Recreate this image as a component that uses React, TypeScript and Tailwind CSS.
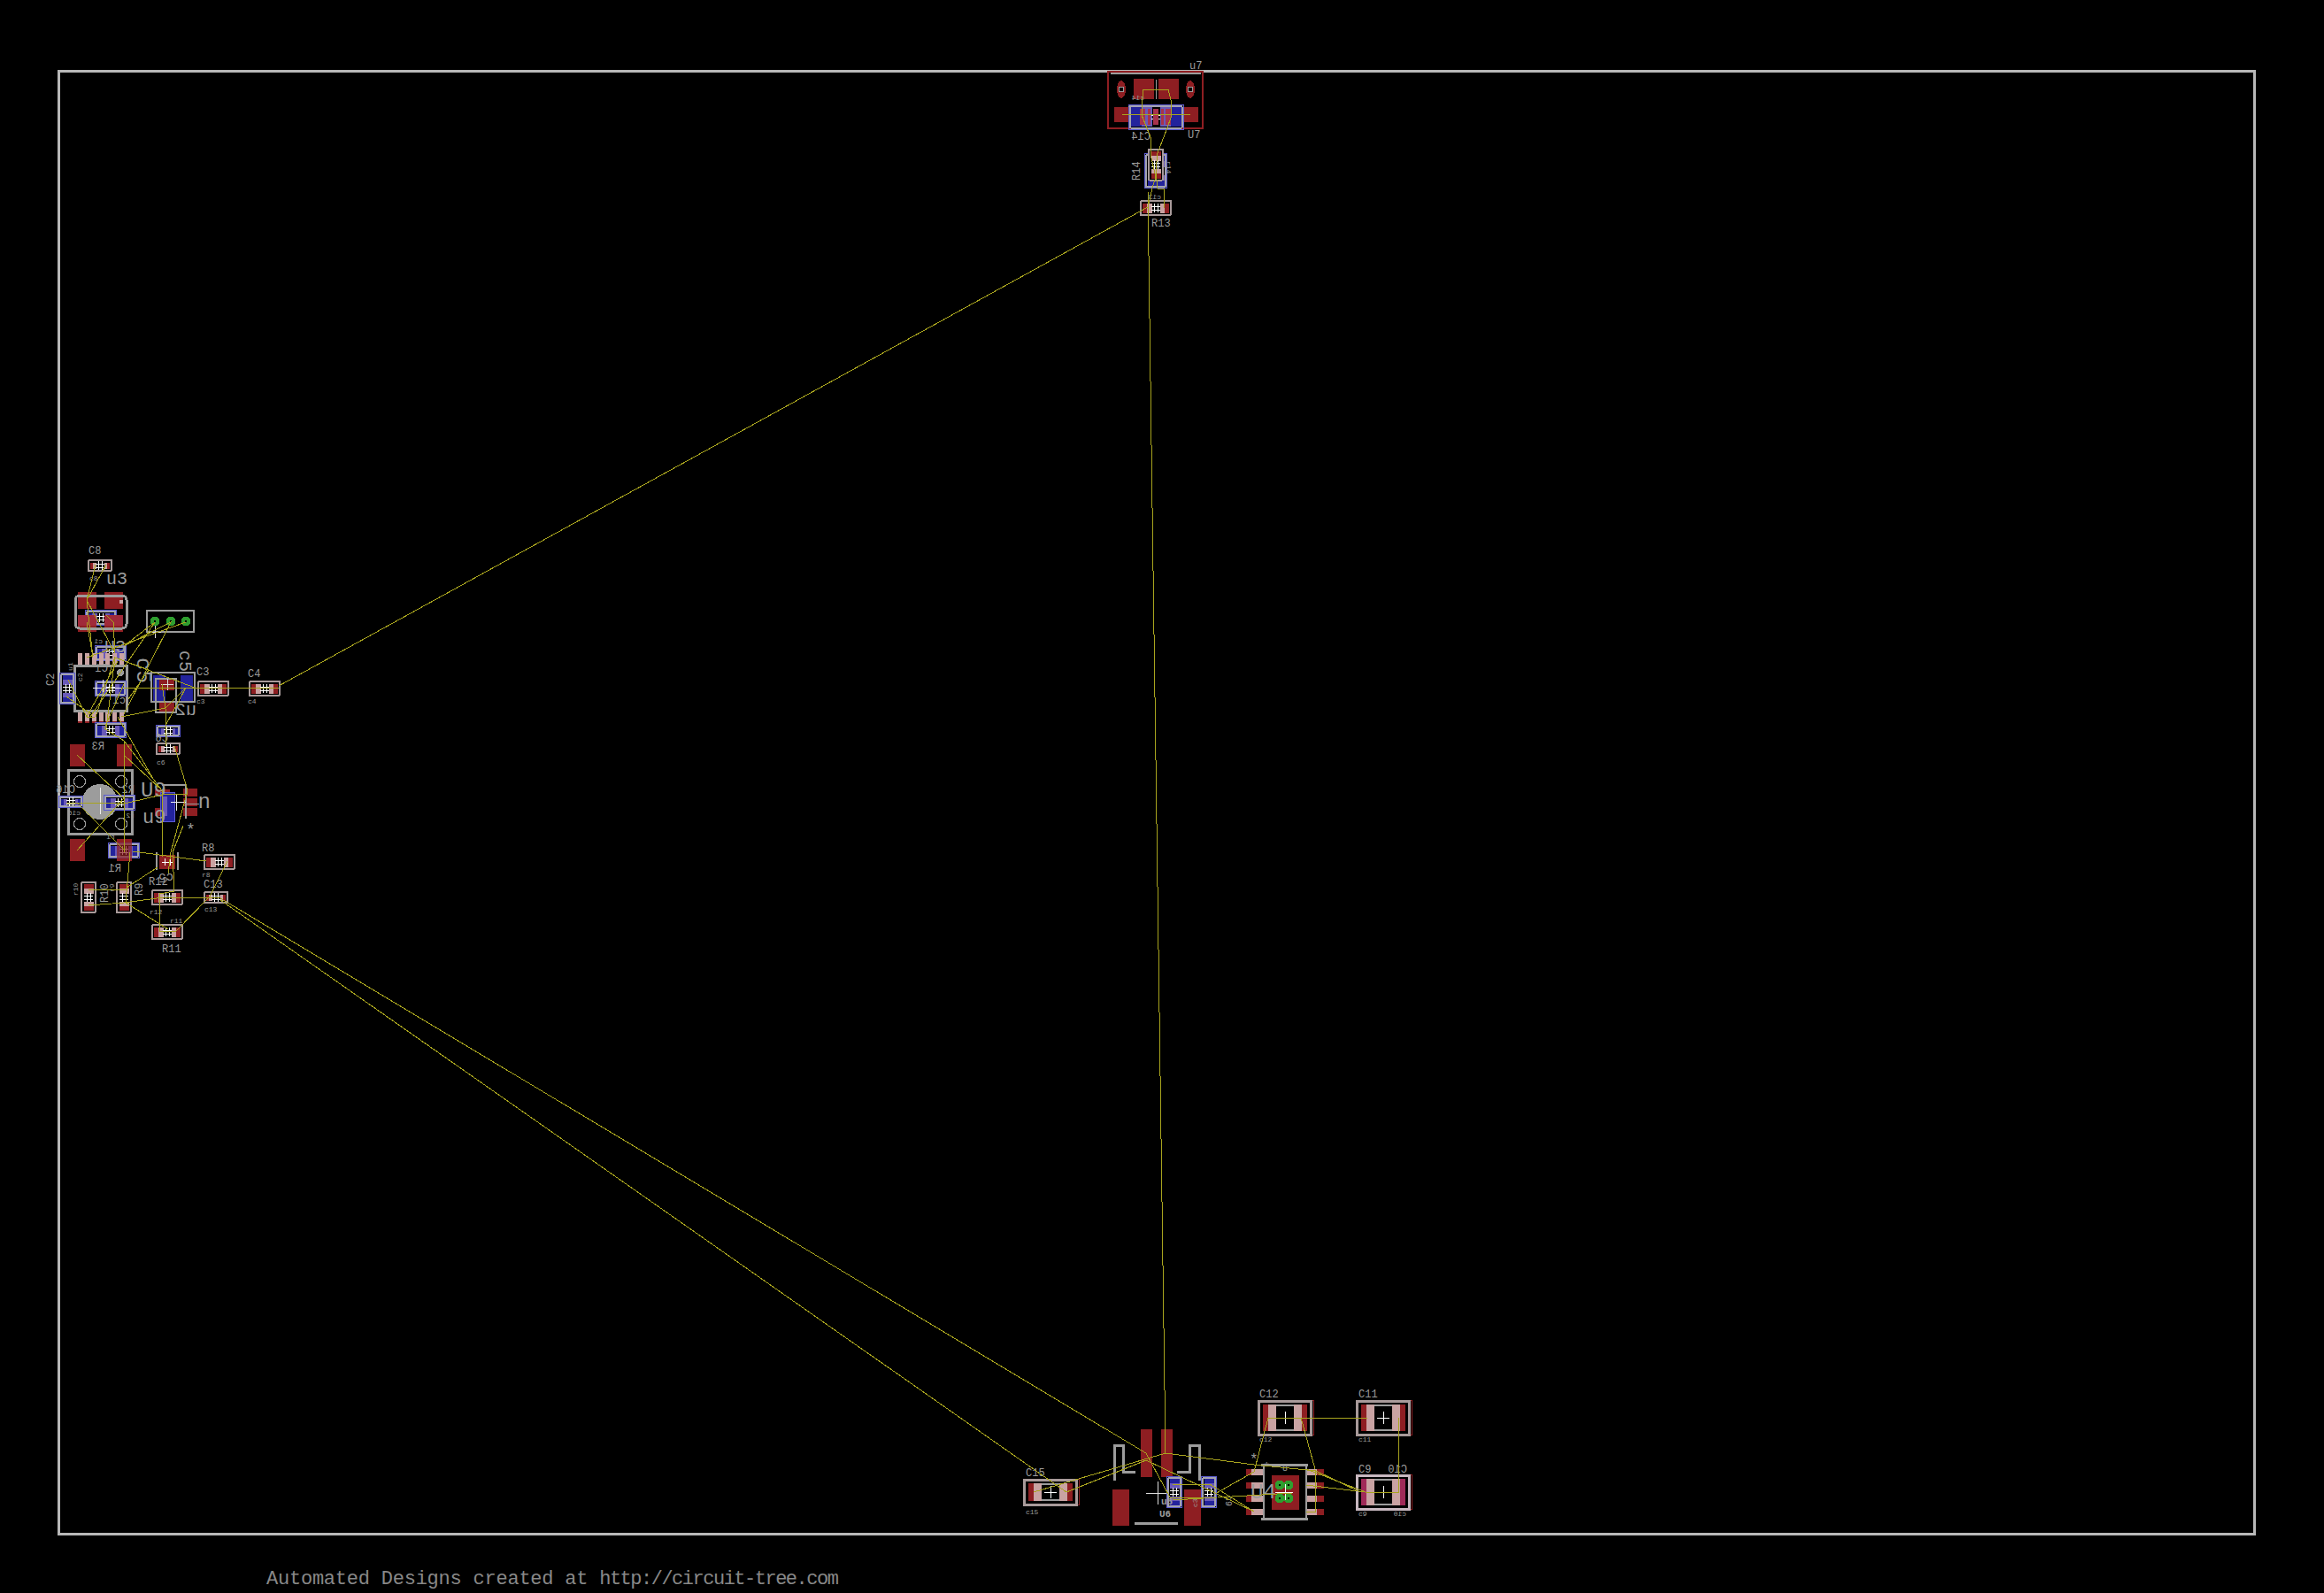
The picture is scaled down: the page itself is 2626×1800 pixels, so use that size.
const GREY = "#9c9c9c";
const SILK = "#a89a9a";
const RED = "#8e1e22";
const PINK = "#c9a3a3";
const BLUE = "#23239c";
const LILAC = "#6a5ab8";
const WIRE = "#a8a41e";
const GREEN = "#2f9e2f";

type Pt = [number, number];

// airwires, in board pixels
const wires: Pt[][] = [
  // long runs
  [[1297, 234], [315, 775]],
  [[1297, 217], [1317, 1642]],
  [[249, 1015], [1295, 1642], [1322, 1692], [1370, 1692]],
  [[249, 1017], [1205, 1686]],
  // top cluster
  [[1292, 101], [1320, 101], [1323, 113], [1324, 130], [1318, 147], [1308, 173], [1306, 193], [1308, 213], [1315, 213], [1315, 235]],
  [[1268, 129], [1345, 129]],
  [[1292, 101], [1290, 120], [1290, 130], [1300, 155], [1300, 175], [1306, 200], [1302, 212], [1297, 235]],
  // bottom cluster
  [[1168, 1686], [1317, 1642], [1417, 1655], [1487, 1662], [1537, 1686]],
  [[1205, 1686], [1295, 1650], [1417, 1708]],
  [[1325, 1677], [1367, 1677], [1417, 1708]],
  [[1325, 1695], [1460, 1687]],
  [[1373, 1688], [1417, 1663], [1433, 1602], [1545, 1602]],
  [[1470, 1602], [1486, 1660], [1487, 1708], [1476, 1708]],
  [[1580, 1602], [1580, 1686], [1543, 1686], [1476, 1660]],
  [[1476, 1678], [1543, 1686]],
  // left cluster, upper
  [[108, 638], [98, 678], [105, 743]],
  [[120, 638], [98, 678], [130, 738]],
  [[98, 703], [105, 742]],
  [[128, 703], [130, 738]],
  [[120, 695], [128, 703]],
  [[98, 743], [210, 703]],
  [[140, 730], [193, 703], [140, 807]],
  [[140, 730], [175, 703], [102, 810]],
  [[130, 743], [220, 777], [208, 777]],
  [[130, 743], [168, 757], [145, 790]],
  [[140, 777], [315, 777]],
  [[77, 768], [98, 810], [107, 810]],
  [[75, 787], [103, 807]],
  [[133, 747], [98, 810]],
  [[130, 742], [108, 810]],
  [[130, 742], [120, 823]],
  [[140, 773], [118, 823]],
  [[137, 810], [187, 800], [210, 777], [187, 820]],
  [[183, 773], [187, 800], [188, 843]],
  [[133, 810], [173, 880]],
  [[197, 843], [212, 893], [193, 963], [190, 987]],
  [[140, 837], [140, 963]],
  [[118, 823], [140, 837], [173, 880], [183, 893]],
  [[87, 853], [140, 902]],
  [[87, 961], [140, 902]],
  [[140, 853], [183, 893]],
  // left cluster, lower
  [[75, 907], [145, 907], [183, 898]],
  [[87, 907], [140, 960]],
  [[150, 962], [233, 973]],
  [[147, 963], [142, 1020], [190, 1050]],
  [[183, 893], [183, 968]],
  [[212, 897], [183, 897]],
  [[207, 933], [195, 963], [197, 1007], [180, 1010], [180, 1052]],
  [[178, 980], [143, 1003]],
  [[100, 1005], [143, 1005]],
  [[100, 1023], [140, 1020], [177, 1015], [250, 1014]],
  [[257, 973], [237, 1013], [198, 1053], [180, 1052]],
];

type ChipProps = { x: number; y: number; w?: number; h?: number; layer?: "top" | "bottom"; turn?: boolean };

function Chip({ x, y, w = 35, h = 17, layer = "top", turn = false }: ChipProps) {
  const bottom = layer === "bottom";
  const pad = (w - 14) / 2;
  const half = pad / 2;
  const transform = `translate(${x} ${y})${turn ? " rotate(90)" : ""}`;
  return (
    <g transform={transform}>
      {bottom && <rect x={-w / 2} y={-h / 2} width={w} height={h} fill="none" stroke="#5b5bd0" />}
      <rect
        x={-w / 2 + (bottom ? 1.5 : 0.5)}
        y={-h / 2 + (bottom ? 1.5 : 0.5)}
        width={w - (bottom ? 3 : 1)}
        height={h - (bottom ? 3 : 1)}
        rx={1}
        fill="#000"
        stroke={bottom ? "#a3a3b0" : SILK}
        strokeWidth="2"
      />
      {[-1, 1].map((s) => (
        <g key={s}>
          <rect x={s < 0 ? -w / 2 + 2.5 : w / 2 - 2.5 - half} y={-h / 2 + 3} width={half} height={h - 6} fill={bottom ? BLUE : RED} />
          <rect x={s < 0 ? -w / 2 + 2.5 + half : w / 2 - 2.5 - pad} y={-h / 2 + 3} width={half} height={h - 6} fill={bottom ? LILAC : PINK} />
        </g>
      ))}
      <path d="M-5 -2H5M-5 2H5M-2 -5V5M2 -5V5" stroke="#fff" fill="none" />
    </g>
  );
}

type BigCapProps = { x: number; y: number; h?: number; tint?: string; edge?: string };

function BigCap({ x, y, h = 38, tint = RED, edge = SILK }: BigCapProps) {
  const t = h / 2;
  return (
    <g transform={`translate(${x} ${y})`}>
      <rect x={-31} y={-t - 1} width={63} height={h + 1} fill="none" stroke={RED} />
      <rect x={-29.5} y={-t} width={59} height={h} fill="#000" stroke={edge} strokeWidth="3" />
      <rect x={-25} y={4 - t} width={15} height={h - 8} fill={tint} />
      <rect x={10} y={4 - t} width={15} height={h - 8} fill={tint} />
      <rect x={-19} y={4 - t} width={9} height={h - 8} fill={PINK} />
      <rect x={10} y={4 - t} width={9} height={h - 8} fill={PINK} />
      <path d={`M-10 ${5 - t}H10M-10 ${t - 5}H10`} stroke={GREY} strokeWidth="2" />
      <path d="M-7 0H7M0 -7V7" stroke="#fff" />
    </g>
  );
}

type LabelProps = { x: number; y: number; t: string; s?: number; flip?: boolean; rot?: number; bold?: boolean };

function Label({ x, y, t, s = 11, flip = false, rot = 0, bold = false }: LabelProps) {
  const transform = `translate(${x} ${y})${rot ? ` rotate(${rot})` : ""}${flip ? " scale(-1 1)" : ""}`;
  return (
    <text
      transform={transform}
      fontSize={s}
      fontWeight={bold ? "bold" : "normal"}
      fill={GREY}
      fontFamily="'Liberation Mono', monospace"
    >
      {t}
    </text>
  );
}

function Pads({ rects, fill = RED }: { rects: number[][]; fill?: string }) {
  return (
    <>
      {rects.map(([x, y, w, h], i) => (
        <rect key={i} x={x} y={y} width={w} height={h} fill={fill} />
      ))}
    </>
  );
}

function TopCluster() {
  return (
    <g>
      <rect x={1252} y={81} width={107} height={64} fill="none" stroke={RED} strokeWidth="2" />
      <path d="M1255 83H1357" stroke={GREY} strokeWidth="2" />
      <Pads rects={[[1281, 89, 23, 23], [1309, 89, 23, 23], [1259, 121, 20, 17], [1335, 121, 19, 17]]} />
      {[1267, 1345].map((x) => (
        <g key={x}>
          <ellipse cx={x} cy={101} rx={5} ry={10} fill={RED} />
          <circle cx={x} cy={101} r={3} fill="#000" stroke={GREY} />
        </g>
      ))}
      <path d="M1306 90V112" stroke={GREY} />
      <Chip x={1306} y={132} w={62} h={28} layer="bottom" />
      <Pads rects={[[1288, 123, 6, 18], [1317, 123, 6, 18], [1303, 123, 6, 18], [1297, 123, 3, 18], [1312, 123, 3, 18]]} fill="#a8324c" />
      <Chip x={1306} y={193} w={39} h={25} layer="bottom" turn />
      <Chip x={1306} y={186} w={36} h={17} turn />
      <Chip x={1306} y={235} />
      <Label x={1344} y={78} t="u7" s={12} />
      <Label x={1342} y={156} t="U7" s={12} />
      <Label x={1300} y={158} t="C14" s={12} flip />
      <Label x={1293} y={113} t="c14" s={8} flip />
      <Label x={1288} y={204} t="R14" s={12} rot={-90} />
      <Label x={1318} y={182} t="r14" s={8} rot={90} />
      <Label x={1312} y={225} t="c13" s={8} flip />
      <Label x={1301} y={256} t="R13" s={12} />
    </g>
  );
}

function Qfn() {
  const pins = [88, 96, 104, 112, 119, 127, 135];
  return (
    <g>
      {pins.map((x) => (
        <g key={x}>
          <rect x={x} y={738} width={5} height={14} fill={PINK} />
          <rect x={x} y={803} width={5} height={14} fill={PINK} />
          <rect x={x} y={815} width={5} height={2} fill={RED} />
        </g>
      ))}
      <rect x={84} y={752} width={59} height={51} fill="none" stroke={GREY} strokeWidth="3" />
      <circle cx={136} cy={760} r={4} fill={GREY} />
    </g>
  );
}

function LeftCluster() {
  return (
    <g>
      <Chip x={113} y={639} w={27} h={13} />
      {/* u3 */}
      <Pads rects={[[88, 669, 21, 19], [118, 669, 21, 19], [88, 695, 21, 19], [118, 695, 21, 19]]} />
      <rect x={85} y={673} width={58} height={37} rx={5} fill="none" stroke={GREY} strokeWidth="3" />
      <circle cx={137} cy={680} r={2.5} fill={PINK} />
      <Chip x={114} y={698} layer="bottom" />
      <Pads rects={[[88, 695, 21, 12], [118, 695, 21, 12]]} fill="#a02a3a" />
      {/* jumper */}
      <rect x={166} y={690} width={53} height={24} fill="none" stroke={GREY} strokeWidth="2" />
      {[175, 193, 210].map((x) => (
        <g key={x}>
          <circle cx={x} cy={702} r={5.5} fill={GREEN} />
          <circle cx={x} cy={702} r={1.5} fill="#000" />
        </g>
      ))}
      <path d="M168 714H182M175 707V721" stroke="#ddd" />
      <Chip x={125} y={738} layer="bottom" />
      <Qfn />
      <Chip x={125} y={778} layer="bottom" />
      <path d="M105 777H142M116 768V786" stroke="#eee" />
      <Chip x={76} y={778} layer="bottom" turn />
      <Chip x={125} y={825} layer="bottom" />
      {/* u2 */}
      <Pads rects={[[173, 763, 14, 29], [204, 763, 14, 29]]} fill={BLUE} />
      <Pads rects={[[180, 768, 17, 12], [180, 793, 17, 12]]} />
      <rect x={171} y={760} width={49} height={33} fill="none" stroke={GREY} strokeWidth="2" />
      <rect x={176} y={767} width={23} height={38} fill="none" stroke={GREY} strokeWidth="2" />
      <path d="M182 773H196M189 767V780" stroke="#ddd" />
      <Chip x={241} y={778} />
      <Chip x={299} y={778} />
      <Chip x={190} y={826} w={27} h={13} layer="bottom" />
      <Chip x={190} y={846} w={27} h={13} />
      {/* switch */}
      <Pads rects={[[79, 841, 17, 25], [132, 841, 17, 25], [79, 948, 17, 25], [132, 948, 17, 25]]} />
      <rect x={77.5} y={870.5} width={72} height={72} fill="none" stroke={GREY} strokeWidth="3" />
      <circle cx={113} cy={906} r={20} fill={GREY} />
      {[[90, 883], [137, 883], [90, 931], [137, 931]].map(([cx, cy]) => (
        <circle key={cx * cy} cx={cx} cy={cy} r={6.5} fill="none" stroke={GREY} />
      ))}
      <path d="M113 890V920" stroke="#eee" />
      <Chip x={80} y={906} w={27} h={13} layer="bottom" />
      <Chip x={135} y={907} layer="bottom" />
      {/* u9 */}
      <Pads rects={[[175, 892, 17, 7], [175, 913, 17, 9], [207, 891, 16, 9], [207, 902, 16, 9], [207, 913, 16, 9]]} />
      <rect x={181} y={895} width={16} height={33} fill={BLUE} stroke="#5b5bd0" />
      <rect x={183} y={900} width={6} height={22} fill={LILAC} />
      <path d="M183 887H210V925" fill="none" stroke={GREY} strokeWidth="2" />
      <path d="M193 906H210M199 897V916" stroke="#eee" />
      <path d="M211 908H225" stroke={GREY} />
      <Chip x={140} y={961} layer="bottom" />
      <rect x={132} y={948} width={17} height={25} fill={RED} fillOpacity="0.7" />
      {/* u5 */}
      <rect x={180} y={966} width={18} height={16} fill={RED} />
      <path d="M177 963V983M201 963V983" stroke={GREY} strokeWidth="2" />
      <path d="M183 974H195M186 970V978M192 970V978" stroke="#fff" />
      <Chip x={248} y={974} />
      <Chip x={100} y={1014} turn />
      <Chip x={140} y={1014} turn />
      <Chip x={189} y={1014} />
      <Chip x={244} y={1014} w={27} h={13} />
      <Chip x={189} y={1053} />

      <Label x={100} y={626} t="C8" s={12} />
      <Label x={101} y={656} t="c8" s={8} />
      <Label x={120} y={660} t="u3" s={20} />
      <Label x={118} y={737} t="U3" s={20} />
      <Label x={116} y={727} t="c1" s={8} flip />
      <Label x={93} y={770} t="c2" s={8} rot={-90} />
      <Label x={61} y={775} t="C2" s={12} rot={-90} />
      <Label x={82} y={758} t="u1" s={8} rot={-90} />
      <Label x={122} y={759} t="C1" s={12} flip />
      <Label x={142} y={795} t="c1" s={12} flip />
      <Label x={118} y={847} t="R3" s={12} flip />
      <Label x={222} y={763} t="C3" s={12} />
      <Label x={280} y={765} t="C4" s={12} />
      <Label x={222} y={795} t="c3" s={8} />
      <Label x={280} y={795} t="c4" s={8} />
      <Label x={155} y={743} t="c5" s={24} rot={90} />
      <Label x={203} y={735} t="c5" s={20} rot={90} />
      <Label x={222} y={808} t="u2" s={20} flip />
      <Label x={177} y={864} t="c6" s={8} />
      <Label x={190} y={838} t="C6" s={12} flip />
      <Label x={159} y={900} t="U9" s={24} />
      <Label x={161} y={930} t="u9" s={22} />
      <Label x={238} y={900} t="u" s={24} rot={180} />
      <Label x={152} y={896} t="R2" s={12} flip />
      <Label x={152} y={924} t="r2" s={8} flip />
      <Label x={85} y={896} t="C16" s={12} flip />
      <Label x={91} y={921} t="c16" s={8} flip />
      <Label x={130} y={948} t="r1" s={8} flip />
      <Label x={137} y={985} t="R1" s={12} flip />
      <Label x={228} y={962} t="R8" s={12} />
      <Label x={228} y={991} t="r8" s={8} />
      <Label x={88} y={1012} t="r10" s={8} rot={-90} />
      <Label x={122} y={1020} t="R10" s={12} rot={-90} />
      <Label x={129} y={1008} t="r9" s={8} rot={-90} />
      <Label x={161} y={1012} t="R9" s={12} rot={-90} />
      <Label x={168} y={1000} t="R12" s={12} />
      <Label x={169} y={1033} t="r12" s={8} />
      <Label x={230} y={1003} t="C13" s={12} />
      <Label x={231} y={1030} t="c13" s={8} />
      <Label x={192} y={1043} t="r11" s={8} />
      <Label x={183} y={1076} t="R11" s={12} />
      <Label x={196} y={987} t="c5" s={14} rot={180} />
      <Label x={210} y={943} t="*" s={18} />
    </g>
  );
}

function BottomCluster() {
  const pinRows = [1660, 1675, 1690, 1705];
  return (
    <g>
      <Pads rects={[[1289, 1615, 13, 54], [1312, 1615, 13, 54], [1257, 1683, 19, 41], [1338, 1683, 19, 41]]} />
      <path
        d="M1259 1673V1633H1269V1663H1283M1330 1663H1344V1633H1355V1673M1282 1721H1331"
        fill="none"
        stroke={GREY}
        strokeWidth="3"
      />
      <path d="M1295 1687H1321M1308 1674V1700" stroke="#ddd" />
      <Chip x={1327} y={1686} layer="bottom" turn />
      <Chip x={1366} y={1686} layer="bottom" turn />
      <Label x={1312} y={1700} t="u6" s={11} bold />
      <Label x={1310} y={1714} t="U6" s={11} bold />
      <Label x={1353} y={1703} t="c3" s={8} rot={-90} />
      <Label x={1385} y={1690} t="c9" s={10} rot={90} />

      <BigCap x={1187} y={1686} h={28} />
      <BigCap x={1452} y={1602} />
      <BigCap x={1563} y={1602} />
      <BigCap x={1563} y={1686} tint="#a02a58" edge="#c8b8c0" />

      {pinRows.map((y) => (
        <g key={y}>
          <rect x={1408} y={y} width={6} height={7} fill={RED} />
          <rect x={1414} y={y} width={14} height={7} fill={PINK} />
          <rect x={1476} y={y} width={12} height={7} fill={PINK} />
          <rect x={1488} y={y} width={8} height={7} fill={RED} />
        </g>
      ))}
      <path d="M1425 1655H1478M1425 1716H1478" stroke={GREY} strokeWidth="3" />
      <path d="M1428 1655V1716M1476 1655V1716" stroke={GREY} strokeWidth="2" />
      <rect x={1437} y={1667} width={31} height={39} fill={RED} />
      {[[1446, 1678], [1456, 1678], [1446, 1693], [1456, 1693]].map(([cx, cy]) => (
        <g key={cx * cy}>
          <circle cx={cx} cy={cy} r={5.5} fill={GREEN} />
          <circle cx={cx} cy={cy} r={1} fill="#000" />
        </g>
      ))}
      <path d="M1441 1686H1461M1452 1677V1695" stroke="#fff" />

      <Label x={1413} y={1693} t="U4" s={24} />
      <Label x={1412} y={1654} t="*" s={16} />
      <Label x={1427} y={1663} t="*" s={14} />
      <Label x={1449} y={1662} t="8" s={10} />
      <Label x={1159} y={1668} t="C15" s={12} />
      <Label x={1159} y={1711} t="c15" s={8} />
      <Label x={1423} y={1579} t="C12" s={12} />
      <Label x={1423} y={1629} t="c12" s={8} />
      <Label x={1535} y={1579} t="C11" s={12} />
      <Label x={1535} y={1629} t="c11" s={8} />
      <Label x={1535} y={1664} t="C9" s={12} />
      <Label x={1590} y={1664} t="C10" s={12} flip />
      <Label x={1535} y={1713} t="c9" s={8} />
      <Label x={1589} y={1713} t="c10" s={8} flip />
    </g>
  );
}

export default function App() {
  return (
    <div className="flex h-[1800px] w-[2626px] flex-col bg-black">
      <svg width="2626" height="1760" viewBox="0 0 2626 1760" className="block shrink-0" shapeRendering="crispEdges">
        <rect x="66.5" y="80" width="2481" height="1653" fill="none" stroke="#b8b8b8" strokeWidth="3" />
        <TopCluster />
        <LeftCluster />
        <BottomCluster />
        {wires.map((pts, i) => (
          <polyline key={i} points={pts.map((p) => p.join(",")).join(" ")} fill="none" stroke={WIRE} strokeWidth="1" />
        ))}
      </svg>
      <p className="pl-[301px] pt-[15px] font-['Liberation_Mono'] text-[22px] leading-[20px] text-[#888]">
        <span className="tracking-[-0.23px]">Automated Designs created at </span>
        <span className="tracking-[-1.5px]">http://circuit-tree.com</span>
      </p>
    </div>
  );
}
